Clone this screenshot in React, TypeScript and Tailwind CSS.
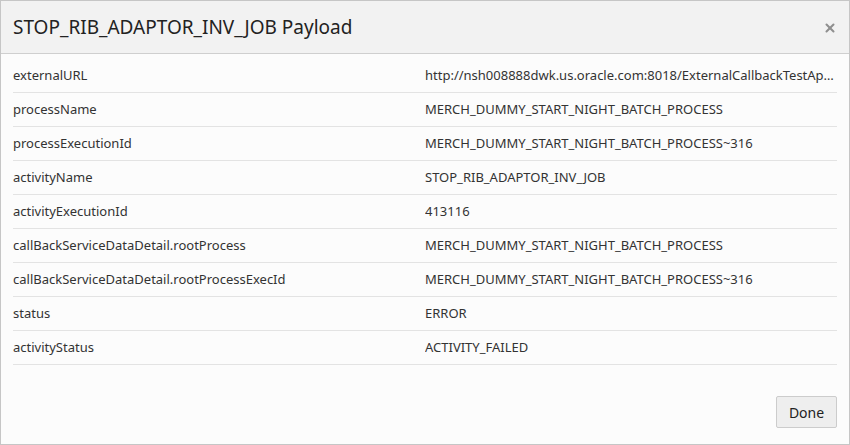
import { X } from 'lucide-react';

const rows: [string, string][] = [
  ['externalURL', 'http://nsh008888dwk.us.oracle.com:8018/ExternalCallbackTestApp/ExternalCallbackTest'],
  ['processName', 'MERCH_DUMMY_START_NIGHT_BATCH_PROCESS'],
  ['processExecutionId', 'MERCH_DUMMY_START_NIGHT_BATCH_PROCESS~316'],
  ['activityName', 'STOP_RIB_ADAPTOR_INV_JOB'],
  ['activityExecutionId', '413116'],
  ['callBackServiceDataDetail.rootProcess', 'MERCH_DUMMY_START_NIGHT_BATCH_PROCESS'],
  ['callBackServiceDataDetail.rootProcessExecId', 'MERCH_DUMMY_START_NIGHT_BATCH_PROCESS~316'],
  ['status', 'ERROR'],
  ['activityStatus', 'ACTIVITY_FAILED'],
];

export default function App() {
  return (
    <div
      className="w-[850px] h-[445px] flex flex-col border border-[#c6c6c6] bg-[#fcfcfc] text-[#333333]"
      style={{ fontFamily: '"Noto Sans", "Open Sans", sans-serif' }}
    >
      <div className="h-[53px] shrink-0 flex items-center justify-between bg-[#f2f2f2] border-b border-[#cfcfcf] pl-[12px] pr-[12px]">
        <h1 className="text-[19px] text-[#222222] leading-none">STOP_RIB_ADAPTOR_INV_JOB Payload</h1>
        <X size={14} strokeWidth={3.5} className="text-[#8f8f8f] mt-[1px]" />
      </div>

      <div className="flex-1 px-[12px] pt-[5px]">
        {rows.map(([k, v]) => (
          <div key={k} className="grid grid-cols-2 h-[34px] items-center border-b border-[#e3e3e3] text-[13px]">
            <span className="truncate">{k}</span>
            <span className="truncate">{v}</span>
          </div>
        ))}
      </div>

      <div className="flex justify-end px-[12px] pb-[16px]">
        <button className="w-[61px] h-[32px] bg-[#eeeeee] border border-[#cccccc] rounded-[2px] text-[14px] text-[#222222]">
          Done
        </button>
      </div>
    </div>
  );
}
